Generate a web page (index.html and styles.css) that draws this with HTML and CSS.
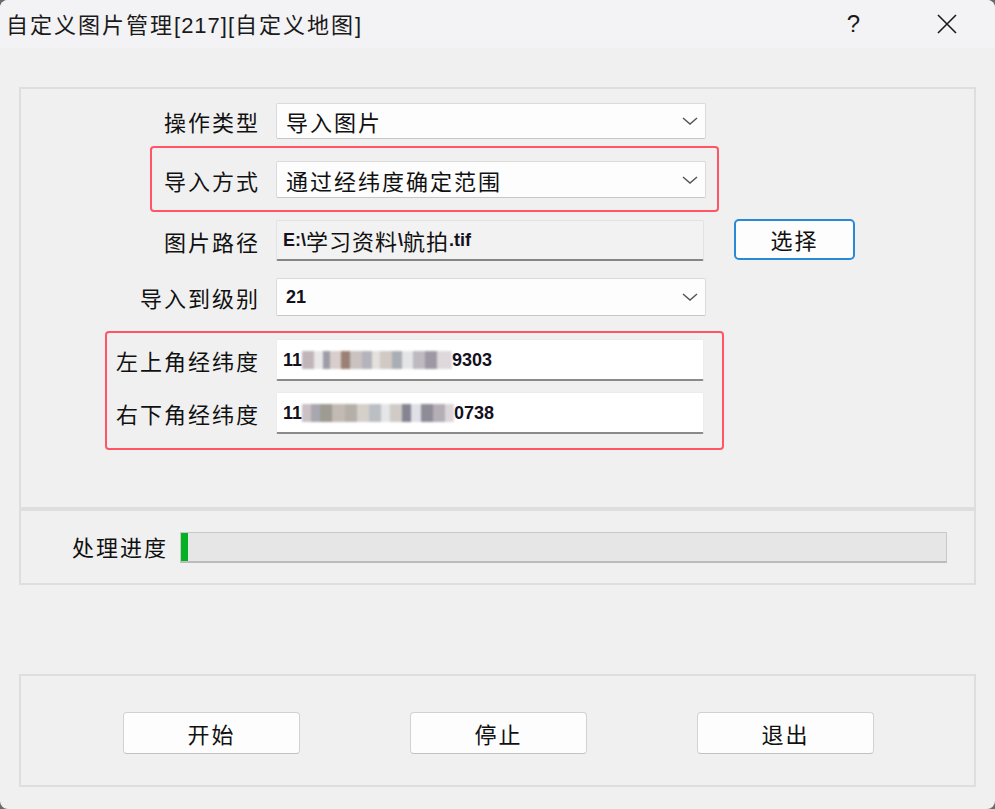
FILE: index.html
```html
<!DOCTYPE html>
<html lang="zh-CN">
<head>
    <meta charset="UTF-8">
    <title>自定义图片管理</title>
    <link rel="stylesheet" href="styles.css">
</head>
<body>
    <div class="window">
        <div class="titlebar">
            <span class="title">自定义图片管理<span class="lat-title">[217][</span>自定义地图<span class="lat-title">]</span></span>
            <span class="help">?</span>
            <span class="close">
                <svg width="20" height="20" viewBox="0 0 20 20"><path d="M1 1 L19 19 M19 1 L1 19" stroke="#1a1a1a" stroke-width="1.6" fill="none"/></svg>
            </span>
        </div>

        <div class="client">
            <div class="group params">
                <div class="row r1">
                    <label>操作类型</label>
                    <div class="combo h36">导入图片<svg class="chev" width="16" height="8" viewBox="0 0 16 8"><path d="M1 1 L8 7 L15 1" stroke="#555" stroke-width="1.5" fill="none"/></svg></div>
                </div>
                <div class="row r2">
                    <label>导入方式</label>
                    <div class="combo h37">通过经纬度确定范围<svg class="chev" width="16" height="8" viewBox="0 0 16 8"><path d="M1 1 L8 7 L15 1" stroke="#555" stroke-width="1.5" fill="none"/></svg></div>
                </div>
                <div class="row r3">
                    <label>图片路径</label>
                    <div class="edit readonly"><span class="lat">E:\</span>学习资料<span class="lat">\</span>航拍<span class="lat">.tif</span></div>
                    <button class="btn choose">选择</button>
                </div>
                <div class="row r4">
                    <label>导入到级别</label>
                    <div class="combo h38"><span class="lat">21</span><svg class="chev" width="16" height="8" viewBox="0 0 16 8"><path d="M1 1 L8 7 L15 1" stroke="#555" stroke-width="1.5" fill="none"/></svg></div>
                </div>
                <div class="row r5">
                    <label>左上角经纬度</label>
                    <div class="edit"><span class="lat">11</span><span class="mosaic m1"></span><span class="lat">9303</span></div>
                </div>
                <div class="row r6">
                    <label>右下角经纬度</label>
                    <div class="edit"><span class="lat">11</span><span class="mosaic m2"></span><span class="lat">0738</span></div>
                </div>

                <div class="mark mark-mode"></div>
                <div class="mark mark-range"></div>
            </div>

            <div class="group progress-group">
                <span class="progress-label">处理进度</span>
                <div class="progress"><div class="progress-fill" style="width: 7px"></div></div>
            </div>

            <div class="group actions">
                <button class="btn action">开始</button>
                <button class="btn action">停止</button>
                <button class="btn action">退出</button>
            </div>
        </div>
    </div>
</body>
</html>
```

FILE: styles.css
```css
body {
    margin: 0;
    padding: 0;
    background-color: #6b6b6b;
    font-family: "Noto Sans CJK SC", "Liberation Sans", sans-serif;
    font-size: 22px;
    color: #111;
}

.window {
    width: 995px;
    height: 809px;
    background: #f0f0f0;
    border-radius: 8px;
    overflow: hidden;
}

/* barra de título */
.titlebar {
    height: 48px;
    background: #f3f2f5;
    display: flex;
    align-items: center;
    position: relative;
}

.title {
    padding-left: 6px;
    letter-spacing: 2px;
    color: #1a1a1a;
    line-height: 1;
}

.lat-title {
    font-family: "Liberation Sans", sans-serif;
    letter-spacing: 1px;
}

.help {
    margin-left: auto;
    margin-right: 77px;
    font-family: "Liberation Sans", sans-serif;
    font-size: 24px;
    color: #1a1a1a;
}

.close {
    display: flex;
    margin-right: 38px;
}

.client {
    padding: 0 19px;
}

.group {
    border: 2px solid #dedede;
    box-sizing: border-box;
}

/* parámetros */
.params {
    margin-top: 39px;
    height: 422px;
    padding-top: 14px;
    position: relative;
}

.row {
    display: flex;
    align-items: center;
}

.row label {
    width: 239px;
    margin-right: 16px;
    text-align: right;
    letter-spacing: 2px;
    line-height: 1;
}

.r2 { margin-top: 22px; }
.r3 { margin-top: 22px; }
.r4 { margin-top: 17px; }
.r5 { margin-top: 23px; }
.r6 { margin-top: 11px; }

.combo {
    width: 430px;
    box-sizing: border-box;
    background: #fdfdfd;
    border: 1px solid #dadada;
    border-bottom-color: #c6c6c6;
    border-radius: 2px;
    display: flex;
    align-items: center;
    padding-left: 9px;
    letter-spacing: 2px;
    line-height: 1;
}

.h36 { height: 36px; }
.h37 { height: 37px; }
.h38 { height: 38px; }

.chev {
    margin-left: auto;
    margin-right: 7px;
}

.edit {
    width: 428px;
    height: 42px;
    box-sizing: border-box;
    background: #ffffff;
    border: 1px solid #ececec;
    border-bottom: 2px solid #8a8a8a;
    border-radius: 2px;
    display: flex;
    align-items: center;
    padding-left: 6px;
    letter-spacing: 1px;
    line-height: 1;
}

.edit.readonly {
    height: 41px;
    background: #f2f2f2;
    border-color: #e2e2e2;
    border-bottom-color: #858585;
}

.lat {
    font-family: "Liberation Sans", sans-serif;
    font-size: 18px;
    font-weight: bold;
    letter-spacing: 0;
    color: #14101e;
}

.mosaic {
    display: inline-block;
    height: 18px;
    filter: blur(1.2px);
    opacity: 0.85;
}

.m1 {
    width: 150px;
    background: linear-gradient(90deg,
        #b6a9ad 0 8%, #e4e2e2 8% 14%, #8c8c99 14% 19%, #d2c6c3 19% 26%, #8a6a5e 26% 32%,
        #c0b8b4 32% 40%, #a7a5b1 40% 47%, #e0dbd7 47% 52%, #c8c0ba 52% 60%, #9aa0a6 60% 67%,
        #dfe1e3 67% 74%, #b3aeb6 74% 82%, #8e8795 82% 90%, #d9d2d6 90% 100%);
}

.m2 {
    width: 152px;
    background: linear-gradient(90deg,
        #c2b6ba 0 6%, #9a98a3 6% 12%, #8c8a80 12% 20%, #b8aea6 20% 28%, #a9a29b 28% 36%,
        #cfc8c2 36% 44%, #b0b4ba 44% 52%, #e0e2e4 52% 58%, #c8c2bc 58% 66%, #707080 66% 72%,
        #dadce2 72% 78%, #7c7886 78% 86%, #a8a0aa 86% 94%, #d6d0d4 94% 100%);
}

.btn {
    font-family: "Noto Sans CJK SC", "Liberation Sans", sans-serif;
    font-size: 22px;
    letter-spacing: 2px;
    color: #111;
    background: #fdfdfd;
    border: 1px solid #d2d2d2;
    border-bottom-color: #c2c2c2;
    border-radius: 4px;
    padding: 0;
    line-height: 1;
}

.choose {
    width: 121px;
    height: 41px;
    margin-left: 30px;
    margin-top: -3px;
    border: 2px solid #2a88d8;
    border-radius: 5px;
}

.mark {
    position: absolute;
    border: 2px solid #ff5666;
    border-radius: 4px;
    box-sizing: border-box;
}

.mark-mode {
    left: 129px;
    top: 57px;
    width: 569px;
    height: 66px;
}

.mark-range {
    left: 84px;
    top: 242px;
    width: 619px;
    height: 119px;
}

/* progreso */
.progress-group {
    height: 76px;
    display: flex;
    align-items: center;
    padding-left: 51px;
}

.progress-label {
    letter-spacing: 2px;
    margin-right: 12px;
    margin-top: -3px;
    line-height: 1;
}

.progress {
    width: 767px;
    height: 31px;
    box-sizing: border-box;
    background: #e6e6e6;
    border: 1px solid #c8c8c8;
    border-bottom: 2px solid #bcbcbc;
    display: flex;
}

.progress-fill {
    background: #06b025;
}

/* botones */
.actions {
    margin-top: 89px;
    height: 113px;
    display: flex;
    align-items: flex-start;
    padding-top: 36px;
    padding-left: 102px;
    gap: 110px;
}

.action {
    width: 177px;
    height: 42px;
}
```
